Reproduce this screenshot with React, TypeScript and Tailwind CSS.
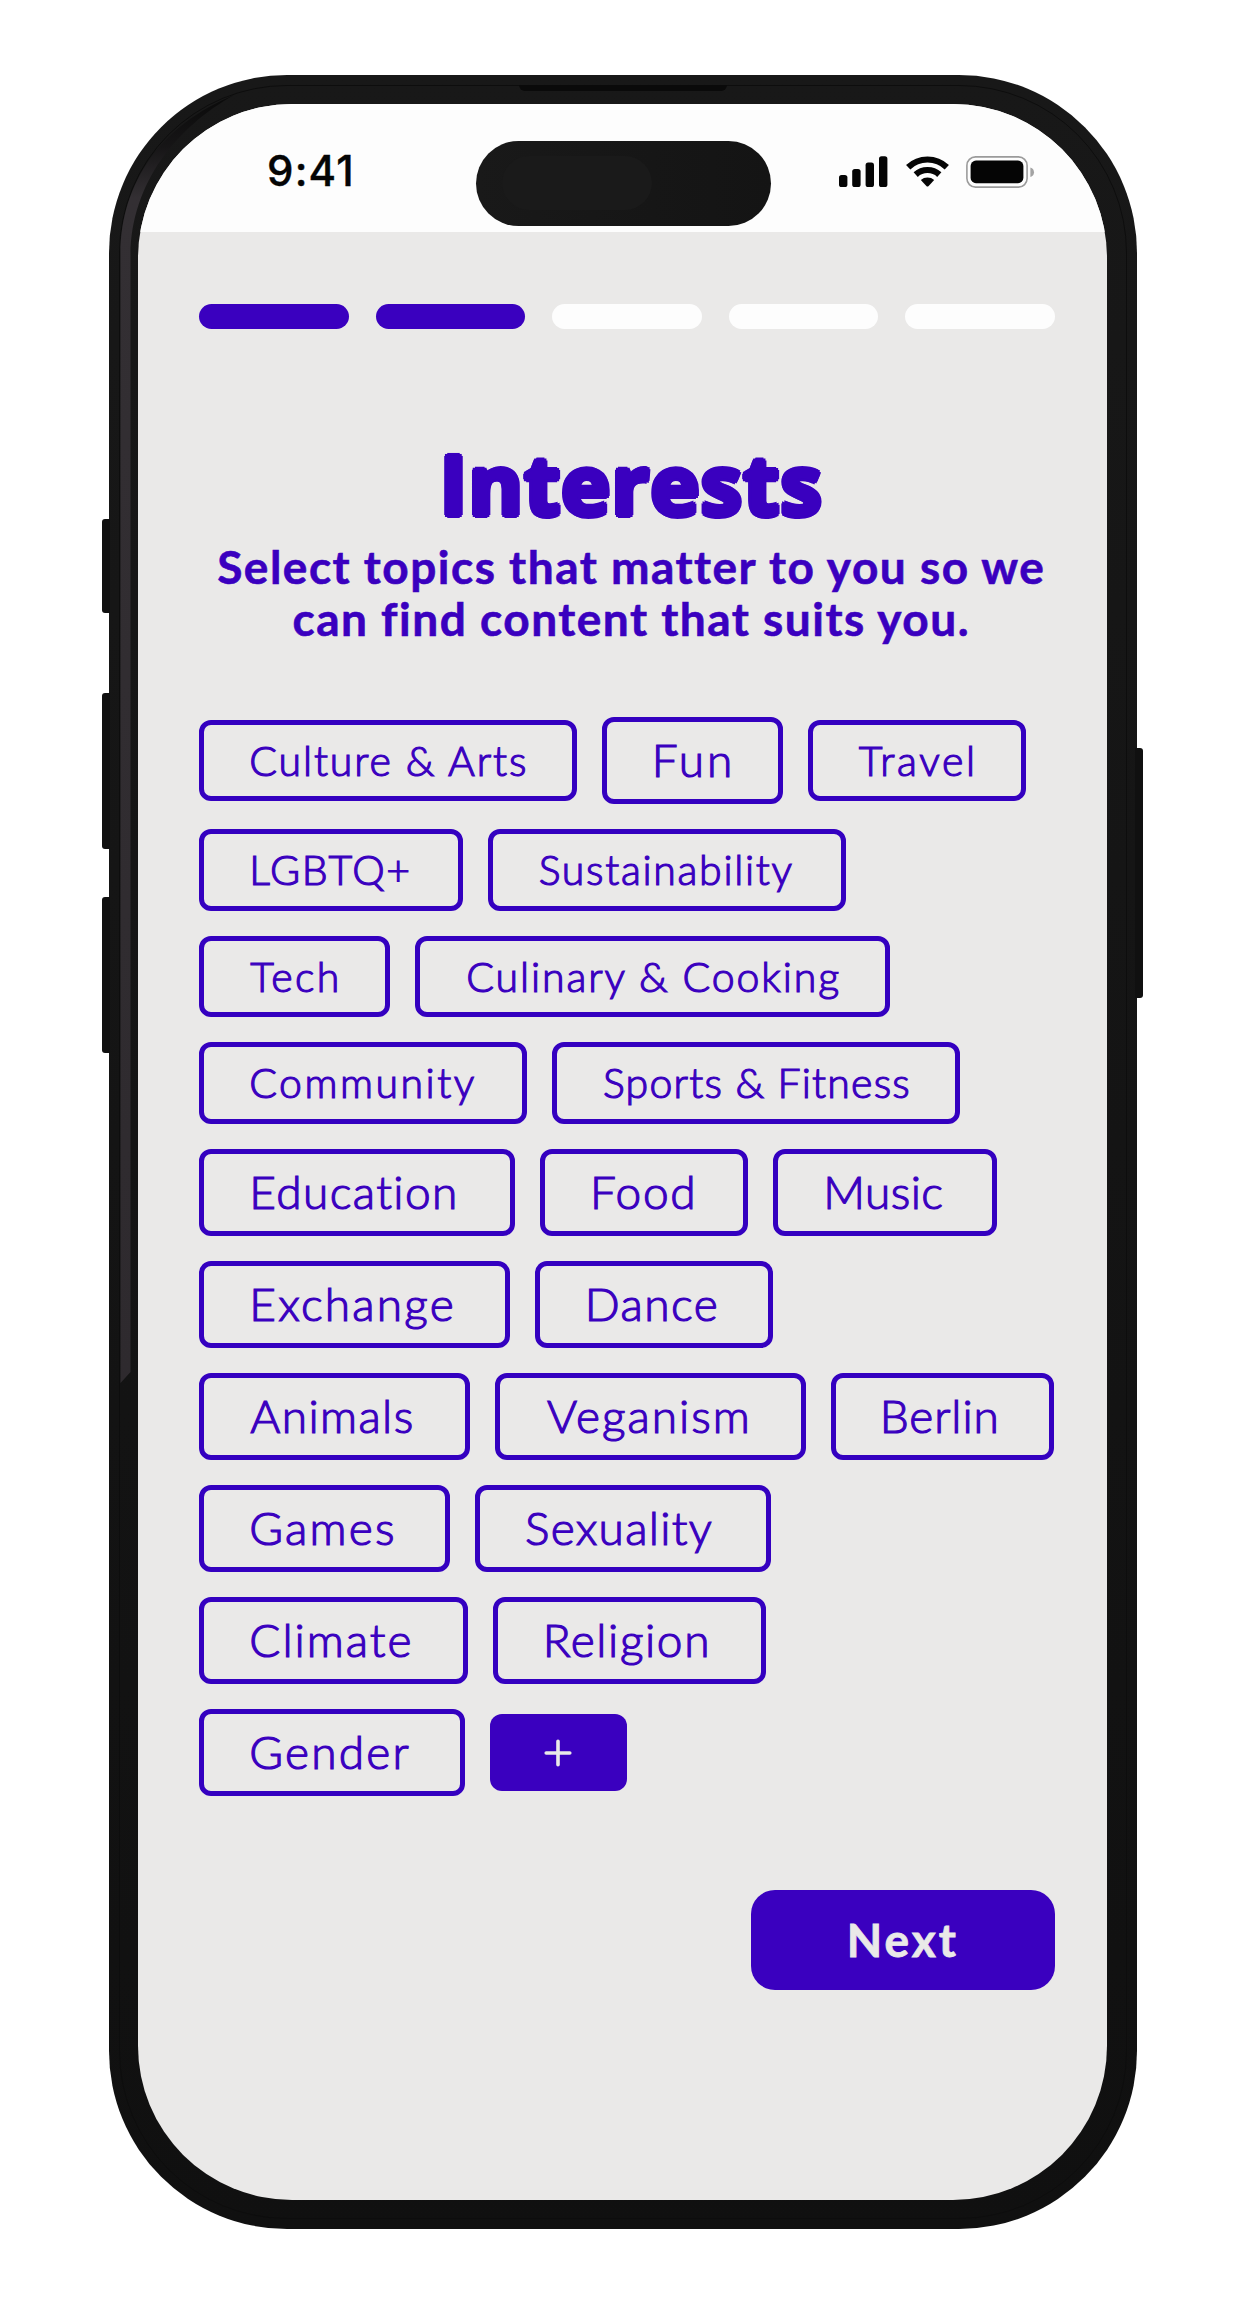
type Topic = { label: string; size: string };

const small = 'h-[81.8px] text-[41px]';
const large = 'h-[87.1px] text-[46px]';

const rows: Topic[][] = [
  [
    { label: 'Culture & Arts', size: `${small} w-[377.4px] pl-[45px] tracking-[1.9px]` },
    { label: 'Fun', size: `${large} w-[181px] pl-[45px] tracking-[3px]` },
    { label: 'Travel', size: `${small} w-[218.4px] pl-[46px] tracking-[2.7px]` },
  ],
  [
    { label: 'LGBTQ+', size: `${small} w-[263.4px] pl-[45px] tracking-[1.7px]` },
    { label: 'Sustainability', size: `${small} w-[358.4px] pl-[46px] tracking-[1.7px]` },
  ],
  [
    { label: 'Tech', size: `${small} w-[191px] pl-[46px] tracking-[2.4px]` },
    { label: 'Culinary & Cooking', size: `${small} w-[474.4px] pl-[46px] tracking-[1.9px]` },
  ],
  [
    { label: 'Community', size: `${small} w-[327.7px] pl-[45px] tracking-[2.5px]` },
    { label: 'Sports & Fitness', size: `${small} w-[408px] pl-[46px] tracking-[1.2px]` },
  ],
  [
    { label: 'Education', size: `${large} w-[315.7px] pl-[45px] tracking-[1.4px]` },
    { label: 'Food', size: `${large} w-[208.3px] pl-[45px] tracking-[1.6px]` },
    { label: 'Music', size: `${large} w-[223.7px] pl-[45px] tracking-[0.4px]` },
  ],
  [
    { label: 'Exchange', size: `${large} w-[310.4px] pl-[45px] tracking-[2.2px]` },
    { label: 'Dance', size: `${large} w-[238.4px] pl-[45px] tracking-[1.5px]` },
  ],
  [
    { label: 'Animals', size: `${large} w-[270.7px] pl-[46px] tracking-[1.4px]` },
    { label: 'Veganism', size: `${large} w-[310.7px] pl-[47px] tracking-[2px]` },
    { label: 'Berlin', size: `${large} w-[223.7px] pl-[44px] tracking-[0.9px]` },
  ],
  [
    { label: 'Games', size: `${large} w-[250.7px] pl-[45px] tracking-[2.2px]` },
    { label: 'Sexuality', size: `${large} w-[295.7px] pl-[45px] tracking-[1.3px]` },
  ],
  [
    { label: 'Climate', size: `${large} w-[268.4px] pl-[45px] tracking-[2px]` },
    { label: 'Religion', size: `${large} w-[273.7px] pl-[45px] tracking-[1.6px]` },
  ],
  [{ label: 'Gender', size: `${large} w-[265.7px] pl-[45px] tracking-[2.2px]` }],
];

function Chip({ label, size }: Topic) {
  return (
    <button
      className={`flex shrink-0 items-center whitespace-nowrap rounded-[12px] border-[5px] border-[#3400c0] pb-px font-light leading-none text-[#3a00bf] [-webkit-text-stroke:1.2px_#3a00bf] ${size}`}
    >
      {label}
    </button>
  );
}

function Signal() {
  return (
    <svg className="h-[31px] w-[49px]" viewBox="0 0 49 31" fill="#050505">
      <rect x="0" y="19" width="8.4" height="12" rx="2.6" />
      <rect x="13.2" y="13" width="8.4" height="18" rx="2.6" />
      <rect x="26.6" y="6.6" width="8.4" height="24.4" rx="2.6" />
      <rect x="40" y="0.2" width="8.4" height="30.8" rx="2.6" />
    </svg>
  );
}

function Wifi() {
  return (
    <svg className="h-[31px] w-[43px]" viewBox="0 0 43 31" fill="none">
      <path d="M2.2 11.2A28 28 0 0 1 40.8 11.2" stroke="#050505" strokeWidth="6.2" />
      <path d="M9.7 18.6A17.5 17.5 0 0 1 33.3 18.6" stroke="#050505" strokeWidth="6.2" />
      <path d="M14.8 24A10.5 10.5 0 0 1 28.2 24L22.4 30.2Q21.5 31 20.6 30.2Z" fill="#050505" />
    </svg>
  );
}

function Battery() {
  return (
    <svg className="h-[32px] w-[69px]" viewBox="0 0 69 32" fill="none">
      <rect x="0.9" y="0.9" width="60.2" height="30.2" rx="8.6" stroke="#9b9b9b" strokeWidth="1.6" />
      <rect x="4.6" y="4.6" width="52.8" height="22.6" rx="5.4" fill="#050505" />
      <path d="M64.4 11.4Q68 12.6 68 16.2T64.4 21Z" fill="#a3a3a3" />
    </svg>
  );
}

export default function App() {
  return (
    <div className="h-[2318px] w-[1252px] bg-white pl-[108.5px] pt-[75px] font-['Lato',sans-serif] text-[#3a00bf]">
      <div className="relative h-[2154px] w-[1028.5px] rounded-[178px] bg-gradient-to-b from-[#181818] to-[#101010]">
        {/* hardware buttons */}
        <span className="absolute left-[-6.5px] top-[444px] h-[94px] w-[8px] rounded-l-[3px] bg-[#101010]" />
        <span className="absolute left-[-6.5px] top-[618px] h-[156px] w-[8px] rounded-l-[3px] bg-[#101010]" />
        <span className="absolute left-[-6.5px] top-[822px] h-[156px] w-[8px] rounded-l-[3px] bg-[#101010]" />
        <span className="absolute right-[-6px] top-[673px] h-[250px] w-[8px] rounded-r-[3px] bg-[#101010]" />

        {/* bezel rim, side sheen and earpiece slot */}
        <span className="absolute inset-[10px] rounded-[168px] border border-[#0d0d0d]" />
        <svg className="absolute left-0 top-0 h-[1320px] w-[160px]" viewBox="0 0 160 1320" fill="none">
          <defs>
            <linearGradient id="sheen" x1="0" y1="0" x2="0" y2="1">
              <stop offset="0" stopColor="#0a0a0a" />
              <stop offset="0.04" stopColor="#161516" />
              <stop offset="0.08" stopColor="#332f33" />
              <stop offset="1" stopColor="#2e2a2e" />
            </linearGradient>
          </defs>
          <path d="M11.5 1308V178C12 108 52 50 125 20C68 52 22 108 21.5 180V1297Z" fill="url(#sheen)" />
        </svg>
        <span className="absolute left-[410px] top-[10px] h-[6px] w-[208px] rounded-b-[6px] bg-[#0a0a0a]" />

        {/* screen */}
        <div className="absolute left-[29.5px] top-[29px] flex h-[2096px] w-[969px] flex-col overflow-hidden rounded-[154px] bg-[#eae9e8]">
          <header className="relative h-[128.3px] shrink-0 bg-[#fdfdfd] text-[#050505]">
            <div className="flex items-start pl-[129px] pt-[42px]">
              <span className="w-[572px] font-['Inter',sans-serif] text-[42px] font-medium leading-[50px] tracking-[1.2px] [-webkit-text-stroke:0.4px_#050505]">
                9:41
              </span>
              <div className="flex pt-[10px]">
                <Signal />
                <span className="w-[18px]" />
                <Wifi />
                <span className="w-[17px]" />
                <Battery />
              </div>
            </div>
            <div className="absolute left-[337.7px] top-[37px] h-[85px] w-[295.3px] rounded-full bg-gradient-to-r from-[#191919] to-[#141414]">
              <div className="ml-[26px] mt-[15px] h-[54px] w-[150px] rounded-full bg-[#1a1a1a]" />
            </div>
          </header>

          <main className="flex flex-col pl-[61.3px] pr-[52.5px] pt-[71.7px]">
            <div className="flex gap-[27.2px]">
              {[true, true, false, false, false].map((done, i) => (
                <span key={i} className={`h-[25px] w-[149.3px] shrink-0 rounded-full ${done ? 'bg-[#3a00bf]' : 'bg-[#fdfdfd]'}`} />
              ))}
            </div>

            <div className="flex w-[864px] flex-col items-center text-center">
              <h1 className="mt-[104px] font-['Open_Sans',sans-serif] text-[83px] font-bold leading-[100px] tracking-[1.2px] [text-shadow:3px_0_0_#3a00bf,-3px_0_0_#3a00bf,0_3px_0_#3a00bf,0_-3px_0_#3a00bf,2.1px_2.1px_0_#3a00bf,-2.1px_2.1px_0_#3a00bf,2.1px_-2.1px_0_#3a00bf,-2.1px_-2.1px_0_#3a00bf]">
                Interests
              </h1>
              <p className="mt-[8px] whitespace-pre-line text-[46px] font-bold leading-[52px] tracking-[1.5px] [-webkit-text-stroke:0.6px_#3a00bf]">
                {'Select topics that matter to you so we\ncan find content that suits you.'}
              </p>
            </div>

            <div className="mt-[72px] flex flex-col gap-[24.9px]">
              {rows.map((row, i) => (
                <div key={i} className="flex items-center gap-[25px]">
                  {row.map((topic) => (
                    <Chip key={topic.label} {...topic} />
                  ))}
                  {i === rows.length - 1 && (
                    <button aria-label="Add topic" className="flex h-[77px] w-[137px] items-center justify-center rounded-[12px] bg-[#3a00bf]">
                      <svg className="h-[28px] w-[28px]" viewBox="0 0 28 28" stroke="#eae9e8" strokeWidth="3.6" strokeLinecap="round">
                        <path d="M14 2.2V25.8M2.2 14H25.8" />
                      </svg>
                    </button>
                  )}
                </div>
              ))}
            </div>

            <button className="mt-[94px] flex h-[100px] w-[303.5px] items-center justify-center self-end rounded-[24px] bg-[#3a00bf] text-[46px] font-bold leading-none tracking-[3px] text-[#eae9e8] [-webkit-text-stroke:0.8px_#eae9e8]">
              Next
            </button>
          </main>
        </div>
      </div>
    </div>
  );
}
